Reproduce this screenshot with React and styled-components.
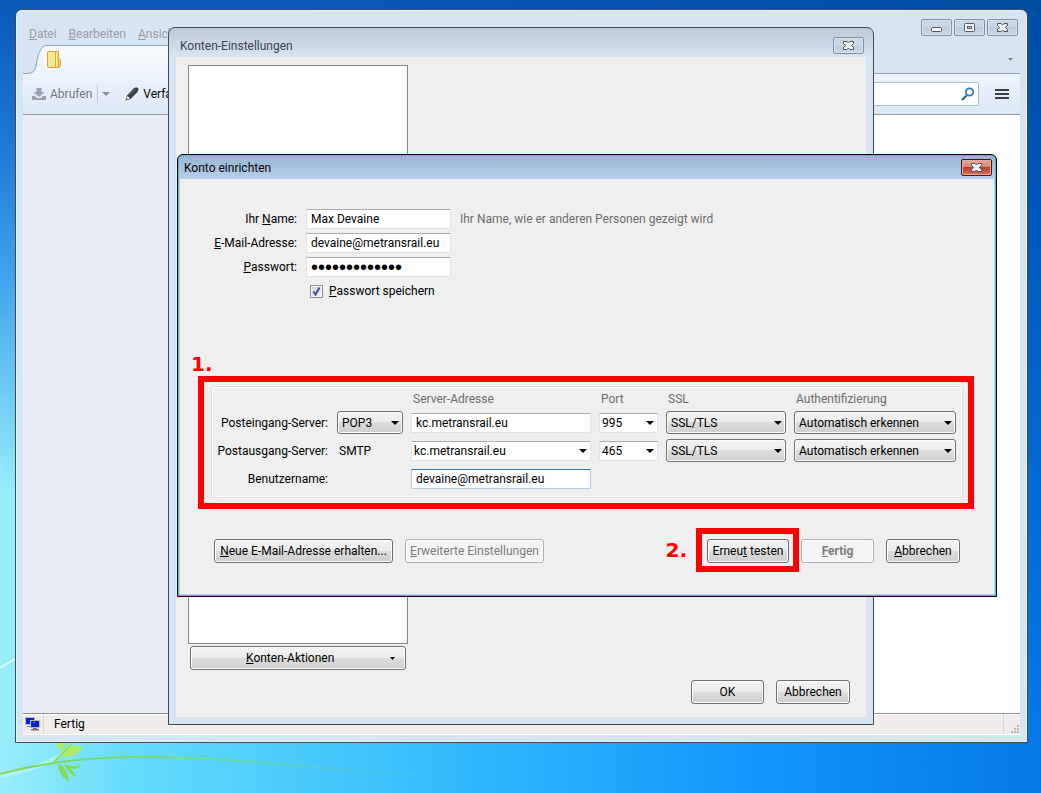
import React from "react";
import styled, { createGlobalStyle, css } from "styled-components";

const Global = createGlobalStyle`
  * { box-sizing: border-box; }
  html, body { margin: 0; }
  body, button, input, select {
    font-family: Roboto, "Noto Sans", sans-serif;
    font-size: 12px;
    line-height: 16px;
    color: #000;
  }
`;

const Desktop = styled.div`
  position: relative;
  min-height: 100vh;
  overflow: hidden;
  background:
    linear-gradient(180deg, #0a58b8 0%, rgba(8, 100, 205, 0.85) 18%, rgba(8, 120, 225, 0.6) 36%, rgba(8, 130, 235, 0) 62%),
    linear-gradient(90deg, #9aeefb 0%, #66dcfb 12%, #34bcfc 42%, #129afc 70%, #0578e6 100%);
`;
const RightShade = styled.div`
  position: absolute;
  inset: 0;
  background: linear-gradient(180deg, #004ea2 0%, rgba(0, 80, 176, 0.8) 25%, rgba(0, 96, 208, 0) 90%);
  mask-image: linear-gradient(90deg, transparent 30%, #000 100%);
`;
const Plant = styled.svg`
  position: absolute;
  left: 0;
  bottom: 0;
`;

/* ---------- window frames ---------- */
const Frame = styled.section`
  position: absolute;
  display: flex;
  flex-direction: column;
  border: 1px solid #45484d;
  background: #d7e4f1;
`;
const MailWindow = styled(Frame)`
  inset: 9px 13px 50px 15px;
  border-radius: 7px 7px 0 0;
  padding: 0 7px 7px;
  box-shadow: inset 0 0 0 1px #e9f1f8;
`;
const SettingsWindow = styled(Frame)`
  top: 27px;
  left: 168px;
  width: 706px;
  border-radius: 7px 7px 0 0;
  padding: 0 7px 7px;
  background: linear-gradient(#bccad8, #d7e4f1 29px);
`;
const SetupWindow = styled(Frame)`
  top: 154px;
  left: 177px;
  width: 820px;
  border-color: #000;
  border-radius: 6px 6px 0 0;
  padding: 0 2px 2px;
  background: linear-gradient(#98b3d2, #b9d1ea 25px);
  box-shadow: inset 0 0 0 1px #48bcd8;
`;
const TitleBar = styled.header`
  display: flex;
  align-items: center;
  justify-content: space-between;
  height: ${(p) => (p.$active ? 24 : 29)}px;
  padding: ${(p) => (p.$active ? 1 : 6)}px 2px 0 4px;
  color: ${(p) => (p.$active ? "#000" : "#3c4248")};
`;
const Title = styled.h1`
  margin: 0;
  font-size: 12px;
  font-weight: 400;
`;
const CaptionButton = styled.button`
  display: flex;
  align-items: center;
  justify-content: center;
  width: 31px;
  height: 17px;
  padding: 0;
  border: 1px solid #8190ab;
  border-radius: 2px;
  background: linear-gradient(#c9d6e4 50%, #bccbdc 50%, #cbd9e8);
  box-shadow: inset 0 0 0 1px #d6e1ec;
  ${(p) => p.$danger && css`
    border-color: #47161b;
    background: linear-gradient(#e7a79a, #d98474 50%, #b93e28 50%, #d5745a);
    box-shadow: inset 0 0 0 1px #eba99b;
  `}
`;

/* ---------- mail window ---------- */
const TopArea = styled.div`
  display: flex;
  justify-content: space-between;
  height: 35px;
`;
const MenuBar = styled.nav`
  display: flex;
  align-items: center;
  gap: 12px;
  padding: 13px 0 0 6px;
`;
const MenuLink = styled.a`
  color: #9a9da1;
  text-decoration: none;
`;
const CaptionGroup = styled.div`
  display: flex;
  gap: 2px;
  padding: 9px 2px 0 0;
`;
const TabStrip = styled.div`
  display: flex;
  height: 29px;
`;
const Tab = styled.div`
  width: 206px;
  padding: 5px 0 0;
  border-top: 1px solid #8f9fb8;
  background: linear-gradient(#f8fafd, #edf4fc);
`;
const TabRest = styled.div`
  flex: 1;
  display: flex;
  justify-content: flex-end;
  align-items: center;
  padding-right: 7px;
  border-bottom: 1px solid #8f9fb8;
`;
const Toolbar = styled.div`
  display: flex;
  align-items: center;
  height: 41px;
  padding: 0 11px 0 9px;
  border-bottom: 1px solid #9a9a9a;
  background: linear-gradient(#edf4fc, #dbe8f6);
`;
const ToolButton = styled.button`
  display: flex;
  align-items: center;
  gap: 4px;
  padding: 0;
  border: 0;
  background: none;
  color: ${(p) => (p.disabled ? "#73787e" : "#000")};
`;
const DropButton = styled(ToolButton)`
  height: 18px;
  margin: 0 15px 0 5px;
  padding-left: 4px;
  border-left: 1px solid #c0cddb;
`;
const SearchBox = styled.label`
  display: flex;
  align-items: center;
  width: 200px;
  height: 24px;
  margin: 0 16px 0 auto;
  padding-right: 3px;
  border: 1px solid #a9bbd0;
  border-radius: 2px;
  background: #fff;
`;
const SearchInput = styled.input`
  flex: 1;
  min-width: 0;
  border: 0;
  outline: 0;
  background: none;
`;
const Panes = styled.div`
  flex: 1;
  display: flex;
`;
const FolderPane = styled.aside`
  width: 200px;
  background: #e7ecf5;
`;
const MessagePane = styled.main`
  flex: 1;
  background: #fff;
`;
const StatusBar = styled.footer`
  display: flex;
  height: 22px;
  border-top: 1px solid #8e8e8e;
  border-bottom: 1px solid #fff;
  background: #f0edec;
  box-shadow: inset 0 1px #fff;
`;
const StatusIcon = styled.div`
  display: flex;
  align-items: center;
  width: 21px;
  padding-left: 2px;
  border-right: 1px solid #d6d6d6;
`;
const StatusText = styled.div`
  flex: 1;
  padding: 2px 10px;
`;
const Grip = styled.div`
  display: flex;
  align-items: flex-end;
  justify-content: flex-end;
  width: 17px;
  padding: 1px;
  border-left: 1px solid #d6d6d6;
`;

/* ---------- shared controls ---------- */
const PushButton = styled.button`
  display: flex;
  align-items: center;
  justify-content: center;
  min-width: ${(p) => p.$width || 74}px;
  height: 24px;
  padding: 0;
  border: 1px solid #707070;
  border-radius: 3px;
  background: linear-gradient(#f3f3f3, #ebebeb 48%, #dddddd 48%, #cfcfcf);
  box-shadow: inset 0 0 0 1px #fbfbfb;
  white-space: nowrap;
  &:disabled {
    border-color: #adb2b5;
    background: #f4f4f4;
    color: #7c7c7c;
  }
`;
const fieldLook = css`
  width: 100%;
  height: 20px;
  border: 1px solid #e2e3ea;
  border-top-color: #abadb3;
  border-radius: 1px;
  background: #fff;
`;
const Field = styled.input`
  ${fieldLook}
  display: block;
  padding: 0 4px;
  outline: 0;
  ${(p) => p.type === "password" && css`
    font-family: "Liberation Sans", sans-serif;
    font-size: 20px;
  `}
  ${(p) => p.$focused && css`
    border-color: #b5cfe7;
    border-top-color: #3d7bad;
  `}
`;
const SelectBox = styled.span`
  position: relative;
  display: block;
  svg {
    position: absolute;
    top: 50%;
    right: 4px;
    margin-top: -2px;
    pointer-events: none;
  }
`;
const SelectInput = styled.select`
  display: block;
  appearance: none;
  outline: 0;
  ${(p) => p.$editable ? css`
    ${fieldLook}
    padding: 0 14px 0 2px;
  ` : css`
    width: 100%;
    height: 23px;
    padding: 0 14px 0 4px;
    border: 1px solid #707070;
    border-radius: 3px;
    background: linear-gradient(#f3f3f3, #ebebeb 48%, #dddddd 48%, #cfcfcf);
    box-shadow: inset 0 0 0 1px #fbfbfb;
  `}
`;

/* ---------- account settings dialog ---------- */
const SettingsBody = styled.div`
  display: flex;
  flex-direction: column;
  padding: 8px 12px 13px;
  background: #efefef;
`;
const AccountList = styled.div`
  width: 220px;
  height: 579px;
  border: 1px solid #828790;
  background: #fff;
`;
const ActionsButton = styled(PushButton)`
  width: 216px;
  margin: 2px 0 10px 2px;
  justify-content: space-between;
  padding: 0 10px 0 55px;
`;
const DialogButtons = styled.div`
  display: flex;
  justify-content: flex-end;
  gap: 12px;
  padding-right: 4px;
`;

/* ---------- account setup dialog ---------- */
const SetupBody = styled.form`
  padding: 30px 20px 22px 18px;
  background: #efefef;
`;
const Identity = styled.div`
  display: grid;
  grid-template-columns: 99px 145px 1fr;
  column-gap: 9px;
  row-gap: 4px;
  align-items: center;
`;
const FieldLabel = styled.label`
  text-align: right;
  white-space: nowrap;
`;
const ServerLabel = styled(FieldLabel)`
  padding-right: 1px;
`;
const Muted = styled.span`
  color: #6d6d6d;
`;
const Remember = styled.label`
  grid-column: 2 / -1;
  display: flex;
  align-items: center;
  gap: 6px;
  height: 20px;
  padding-left: 4px;
`;
const CheckWrap = styled.span`
  position: relative;
  display: flex;
  svg {
    position: absolute;
    inset: 0;
    pointer-events: none;
  }
`;
const Check = styled.input`
  appearance: none;
  width: 13px;
  height: 13px;
  margin: 0;
  border: 1px solid #8e8f8f;
  background: linear-gradient(135deg, #cdd3da, #f4f5f6);
  box-shadow: inset 0 0 0 1px #f4f4f4;
`;
const Highlight = styled.div`
  position: relative;
  border: 6px solid #f00;
`;
const ServerHighlight = styled(Highlight)`
  margin-top: 75px;
  padding: 4px 5px 5px 7px;
`;
const StepNumber = styled.strong`
  color: #f00;
  font-family: "DejaVu Sans", sans-serif;
  font-size: 20px;
  line-height: 24px;
`;
const FirstStep = styled(StepNumber)`
  position: absolute;
  left: -13px;
  bottom: 100%;
  margin-bottom: 6px;
`;
const ServerGroup = styled.fieldset`
  display: grid;
  grid-template-columns: 117px 66px minmax(0, 180fr) minmax(0, 59fr) minmax(0, 120fr) minmax(0, 162fr);
  grid-template-rows: 15px;
  grid-auto-rows: 23px;
  gap: 5px 8px;
  align-items: center;
  min-width: 0;
  margin: 0;
  padding: 4px 6px 7px 0;
  border: 1px solid #d5dfe5;
  border-radius: 3px;
  box-shadow: inset 0 0 0 1px #fff, 0 1px #fff;
`;
const ColumnHead = styled(Muted)`
  padding-left: 2px;
  &:first-child { grid-column: 3; }
`;
const Protocol = styled.span`
  padding-left: 2px;
`;
const UserField = styled.div`
  grid-column: 3;
`;
const Actions = styled.div`
  display: flex;
  align-items: flex-start;
  margin: 19px 14px 0 16px;
`;
const ActionItem = styled.div`
  margin: 11px 0 0 12px;
  &:first-child { margin-left: 0; }
`;
const SecondStep = styled(StepNumber)`
  margin: 10px 9px 0 auto;
`;
const TestHighlight = styled(Highlight)`
  margin-right: -10px;
  padding: 5px 4px 3px 5px;
`;

/* ---------- drawings ---------- */
const Arrow = ({ color = "#000", small }) => (
  <svg width={small ? 5 : 8} height={small ? 3 : 4} viewBox="0 0 8 4" preserveAspectRatio="none" aria-hidden="true">
    <path d="M0 0H8L4 4Z" fill={color} />
  </svg>
);
const CloseGlyph = () => (
  <svg width="11" height="9" viewBox="0 0 11 9" aria-hidden="true">
    <path d="M.5.5H4L5.500 2 7 .5H10.500V2.500L8.300 4.500 10.500 6.500V8.500H7L5.500 7 4 8.500H.5V6.500L2.700 4.500.5 2.500Z" fill="#f4f4f4" stroke="#4a5066" />
  </svg>
);
const MinimizeGlyph = () => (
  <svg width="11" height="11" viewBox="0 0 11 11" aria-hidden="true">
    <rect x=".5" y="5.500" width="10" height="4" rx="1" fill="#f4f4f4" stroke="#535a70" />
  </svg>
);
const MaximizeGlyph = () => (
  <svg width="11" height="9" viewBox="0 0 11 9" aria-hidden="true">
    <rect x=".5" y=".5" width="10" height="8" rx="1" fill="#f4f4f4" stroke="#535a70" />
    <rect x="3.500" y="3.500" width="4" height="2" fill="#c5d2e1" stroke="#535a70" />
  </svg>
);
const TabCurve = () => (
  <svg width="24" height="29" viewBox="0 0 24 29" aria-hidden="true">
    <defs>
      <linearGradient id="tab" x1="0" y1="0" x2="0" y2="1">
        <stop offset="0" stopColor="#f8fafd" />
        <stop offset="1" stopColor="#edf4fc" />
      </linearGradient>
    </defs>
    <path d="M0 29V28.500H4C15 28.500 12 19 15.500 10C18 3 20 .5 24 .5V29Z" fill="url(#tab)" />
    <path d="M0 28.500H4C15 28.500 12 19 15.500 10C18 3 20 .5 24 .5" fill="none" stroke="#8f9fb8" />
  </svg>
);
const FolderIcon = () => (
  <svg width="16" height="17" viewBox="1 0 16 17" aria-hidden="true">
    <path d="M1.500 1.500Q1.500.5 2.500.5H12.500V7L14.500 9V14.500L13 16.500H2Q1.500 16.500 1.500 15.500Z" fill="#f7d768" stroke="#d8a62c" />
    <path d="M2 1H9V16H2Z" fill="#fae893" />
    <path d="M9.500 1V16M12.500 7V16" stroke="#dca935" />
    <path d="M10.500 1.500V15.500" stroke="#fff3b5" />
  </svg>
);
const DownloadIcon = () => (
  <svg width="14" height="14" viewBox="0 0 14 14" fill="#9aa3ad" aria-hidden="true">
    <path d="M4.500 1H9.500V5H12.500L7 10 1.500 5H4.500Z" />
    <path d="M0 9H3L5 11H9L11 9H14V13H0Z" />
  </svg>
);
const PencilIcon = () => (
  <svg width="14" height="14" viewBox="0 0 14 14" aria-hidden="true">
    <path d="M.5 13.500 2 8.500 8.500 1.500Q9.500.5 11 .5H12.500Q13.500 1 13.500 2.500L12.500 5 5.500 12Z" fill="#3b3f46" />
    <path d="M2.500 9 5 11.500 1.500 12.500Z" fill="#e8eef5" />
    <path d="M4.500 8 10 2.500" stroke="#6e747c" />
  </svg>
);
const SearchIcon = () => (
  <svg width="14" height="14" viewBox="0 0 14 14" fill="none" aria-hidden="true">
    <path d="M5.500 8.500 1 13" stroke="#2f6ca8" strokeWidth="2.400" />
    <circle cx="8.500" cy="5" r="3.700" stroke="#3679b5" strokeWidth="1.800" />
  </svg>
);
const MenuIcon = () => (
  <svg width="14" height="10" viewBox="0 0 14 10" fill="#3b4045" aria-hidden="true">
    <path d="M0 0H14V2H0ZM0 4H14V6H0ZM0 8H14V10H0Z" />
  </svg>
);
const NetworkIcon = () => (
  <svg width="15" height="14" viewBox="0 0 15 14" aria-hidden="true">
    <rect x=".5" y=".5" width="9" height="7" fill="#0a1fd0" stroke="#b9b9c0" />
    <path d="M2 9H5V10H2Z" fill="#77777c" />
    <rect x="5.500" y="3.500" width="9" height="7" fill="#0a1fd0" stroke="#b9b9c0" />
    <path d="M8 6 10 5" stroke="#5a8cff" />
    <path d="M8 11H12V12H14V13.500H6V12H8Z" fill="#77777c" />
  </svg>
);
const GripIcon = () => (
  <svg width="8" height="8" viewBox="0 0 8 8" fill="#b4b2b2" aria-hidden="true">
    <path d="M6 0H8V2H6ZM3 3H5V5H3ZM6 3H8V5H6ZM0 6H2V8H0ZM3 6H5V8H3ZM6 6H8V8H6Z" />
  </svg>
);
const Tick = () => (
  <svg width="13" height="13" viewBox="0 0 13 13" aria-hidden="true">
    <path d="M3.500 6.500 5.500 9.500 9.500 2.500" fill="none" stroke="#3f5393" strokeWidth="2" />
  </svg>
);

const Select = ({ label, value, options = [], editable }) => (
  <SelectBox>
    <SelectInput aria-label={label} defaultValue={value} $editable={editable}>
      {[value, ...options].map((o) => <option key={o}>{o}</option>)}
    </SelectInput>
    <Arrow />
  </SelectBox>
);

const servers = [
  { title: "Posteingang-Server:", port: "995" },
  { title: "Postausgang-Server:", port: "465" },
];

export default function App() {
  return (
    <Desktop>
      <Global />
      <RightShade />
      <Plant width="500" height="793" viewBox="0 0 500 793" fill="none" aria-hidden="true">
        <defs>
          <linearGradient id="stem" gradientUnits="userSpaceOnUse" x1="0" y1="0" x2="480" y2="0">
            <stop offset="0" stopColor="#7fd850" />
            <stop offset=".4" stopColor="#72dc88" />
            <stop offset="1" stopColor="#40c0f0" stopOpacity="0" />
          </linearGradient>
        </defs>
        <path d="M0 668 15 659" stroke="#d8fbff" strokeWidth="2" />
        <path d="M0 776Q60 765 72 742" stroke="#c4f6fc" strokeWidth="4" opacity=".6" />
        <path d="M0 774Q60 758 130 757T300 766 480 775" stroke="url(#stem)" strokeWidth="2" />
        <path d="M54 742H65L63 752ZM63 757Q58 744 83 746Q78 758 63 757Z" fill="#a9ec6a" />
        <path d="M53 763 72 743" stroke="#94df5c" strokeWidth="2" />
        <path d="M58 764Q67 766 69 782Q58 775 58 764ZM64 764Q72 768 80 765Q78 771 70 768L77 777Q70 776 64 764Z" fill="#84da50" />
      </Plant>

      <MailWindow>
        <TopArea>
          <MenuBar>
            <MenuLink href="#datei"><u>D</u>atei</MenuLink>
            <MenuLink href="#bearbeiten"><u>B</u>earbeiten</MenuLink>
            <MenuLink href="#ansicht"><u>A</u>nsicht</MenuLink>
          </MenuBar>
          <CaptionGroup>
            <CaptionButton aria-label="Minimieren"><MinimizeGlyph /></CaptionButton>
            <CaptionButton aria-label="Maximieren"><MaximizeGlyph /></CaptionButton>
            <CaptionButton aria-label="Schließen"><CloseGlyph /></CaptionButton>
          </CaptionGroup>
        </TopArea>
        <TabStrip>
          <TabCurve />
          <Tab><FolderIcon /></Tab>
          <TabRest><Arrow color="#7b7b7b" small /></TabRest>
        </TabStrip>
        <Toolbar>
          <ToolButton disabled><DownloadIcon />Abrufen</ToolButton>
          <DropButton disabled aria-label="Abrufen-Optionen"><Arrow color="#8b939c" /></DropButton>
          <ToolButton><PencilIcon />Verfassen</ToolButton>
          <SearchBox>
            <SearchInput aria-label="Suchen" />
            <SearchIcon />
          </SearchBox>
          <ToolButton aria-label="Menü"><MenuIcon /></ToolButton>
        </Toolbar>
        <Panes>
          <FolderPane />
          <MessagePane />
        </Panes>
        <StatusBar>
          <StatusIcon><NetworkIcon /></StatusIcon>
          <StatusText>Fertig</StatusText>
          <Grip><GripIcon /></Grip>
        </StatusBar>
      </MailWindow>

      <SettingsWindow>
        <TitleBar>
          <Title>Konten-Einstellungen</Title>
          <CaptionButton aria-label="Schließen"><CloseGlyph /></CaptionButton>
        </TitleBar>
        <SettingsBody>
          <AccountList />
          <ActionsButton>
            <span><u>K</u>onten-Aktionen</span>
            <Arrow small />
          </ActionsButton>
          <DialogButtons>
            <PushButton $width={73}>OK</PushButton>
            <PushButton>Abbrechen</PushButton>
          </DialogButtons>
        </SettingsBody>
      </SettingsWindow>

      <SetupWindow>
        <TitleBar $active>
          <Title>Konto einrichten</Title>
          <CaptionButton $danger aria-label="Schließen"><CloseGlyph /></CaptionButton>
        </TitleBar>
        <SetupBody onSubmit={(e) => e.preventDefault()}>
          <Identity>
            <FieldLabel htmlFor="name">Ihr <u>N</u>ame:</FieldLabel>
            <Field id="name" defaultValue="Max Devaine" />
            <Muted>Ihr Name, wie er anderen Personen gezeigt wird</Muted>
            <FieldLabel htmlFor="mail"><u>E</u>-Mail-Adresse:</FieldLabel>
            <Field id="mail" defaultValue="devaine@metransrail.eu" />
            <span />
            <FieldLabel htmlFor="password"><u>P</u>asswort:</FieldLabel>
            <Field id="password" type="password" defaultValue="abcdefghijklm" />
            <span />
            <Remember>
              <CheckWrap><Check type="checkbox" defaultChecked /><Tick /></CheckWrap>
              <span><u>P</u>asswort speichern</span>
            </Remember>
          </Identity>

          <ServerHighlight>
            <FirstStep>1.</FirstStep>
            <ServerGroup>
              <ColumnHead>Server-Adresse</ColumnHead>
              <ColumnHead>Port</ColumnHead>
              <ColumnHead>SSL</ColumnHead>
              <ColumnHead>Authentifizierung</ColumnHead>
              {servers.map((s, i) => (
                <React.Fragment key={s.title}>
                  <ServerLabel htmlFor={i ? undefined : "incoming"}>{s.title}</ServerLabel>
                  {i ? <Protocol>SMTP</Protocol> : <Select label="Protokoll" value="POP3" options={["IMAP"]} />}
                  {i
                    ? <Select label="Postausgang-Server" value="kc.metransrail.eu" editable />
                    : <Field id="incoming" defaultValue="kc.metransrail.eu" />}
                  <Select label="Port" value={s.port} editable />
                  <Select label="SSL" value="SSL/TLS" options={["STARTTLS"]} />
                  <Select label="Authentifizierung" value="Automatisch erkennen" />
                </React.Fragment>
              ))}
              <ServerLabel htmlFor="user">Benutzername:</ServerLabel>
              <UserField><Field id="user" defaultValue="devaine@metransrail.eu" $focused /></UserField>
            </ServerGroup>
          </ServerHighlight>

          <Actions>
            <ActionItem><PushButton type="button" $width={179}><span><u>N</u>eue E-Mail-Adresse erhalten...</span></PushButton></ActionItem>
            <ActionItem><PushButton type="button" $width={139} disabled><span><u>E</u>rweiterte Einstellungen</span></PushButton></ActionItem>
            <SecondStep>2.</SecondStep>
            <TestHighlight><PushButton type="button" $width={82}><span>Erneu<u>t</u> testen</span></PushButton></TestHighlight>
            <ActionItem><PushButton type="button" $width={73} disabled><b><u>F</u>ertig</b></PushButton></ActionItem>
            <ActionItem><PushButton type="button"><span><u>A</u>bbrechen</span></PushButton></ActionItem>
          </Actions>
        </SetupBody>
      </SetupWindow>
    </Desktop>
  );
}
